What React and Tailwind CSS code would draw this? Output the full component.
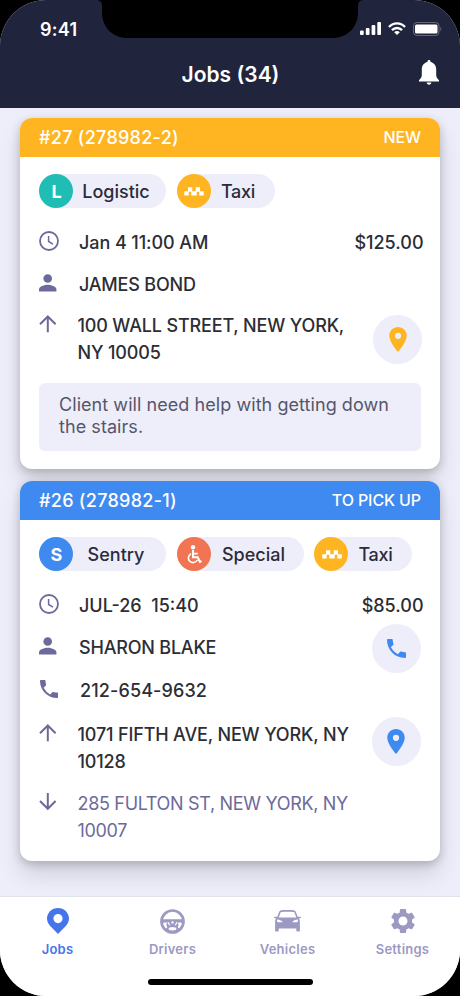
import React from "react";
import clsx from "clsx";
import { MdSettings } from "react-icons/md";

const JOBS = [
	{
		id: "27",
		title: "#27 (278982-2)",
		status: "NEW",
		color: "bg-[#ffb522]",
		accent: "text-[#ffb522]",
		height: "h-[351px]",
		pinClass: "mt-[3px] -mr-px",
		tags: [
			{ type: "logistic", label: "Logistic", width: "w-[127px]" },
			{ type: "taxi", label: "Taxi", width: "w-[98px]" },
		],
		date: "Jan 4 11:00 AM",
		price: "$125.00",
		client: "JAMES BOND",
		pickup: ["100 WALL STREET, NEW YORK,", "NY 10005"],
		note: ["Client will need help with getting down", "the stairs."],
	},
	{
		id: "26",
		title: "#26 (278982-1)",
		status: "TO PICK UP",
		color: "bg-[#3e8af1]",
		accent: "text-[#3e8af1]",
		height: "h-[380px]",
		pinClass: "-mt-[4px] pr-px",
		tags: [
			{ type: "sentry", label: "Sentry", width: "w-[127px]" },
			{ type: "special", label: "Special", width: "w-[127px]" },
			{ type: "taxi", label: "Taxi", width: "w-[98px]" },
		],
		date: "JUL-26\u00a0 15:40",
		price: "$85.00",
		client: "SHARON BLAKE",
		phone: "212-654-9632",
		pickup: ["1071 FIFTH AVE, NEW YORK, NY", "10128"],
		dropoff: ["285 FULTON ST, NEW YORK, NY", "10007"],
	},
];

const TAG_COLORS = {
	logistic: "bg-[#20bdb5]",
	sentry: "bg-[#3e8af1]",
	special: "bg-[#f17552]",
	taxi: "bg-[#ffb522]",
};

const ClockIcon = () => (
	<svg width="20" height="20" viewBox="0 0 20 20" fill="none" stroke="currentColor">
		<circle cx="10" cy="10" r="9" strokeWidth="1.8" />
		<path d="M9.6 5v5.500l4.400 2.600" strokeWidth="1.500" />
	</svg>
);

const PersonIcon = () => (
	<svg width="18" height="18" viewBox="0 0 18 18" fill="currentColor">
		<circle cx="8.700" cy="4.500" r="4.300" />
		<path d="M0 17.500v-2.200c0-2.900 5.800-4.500 8.700-4.500s8.700 1.600 8.700 4.500v2.200z" />
	</svg>
);

const PhoneIcon = ({ className }) => (
	<svg className={className} viewBox="3 3 18 18" fill="currentColor">
		<path d="M6.62 10.79a15.15 15.15 0 0 0 6.59 6.59l2.2-2.2c.27-.27.67-.36 1.02-.24 1.12.37 2.33.57 3.57.57.55 0 1 .45 1 1V20c0 .55-.45 1-1 1C10.61 21 3 13.39 3 4c0-.55.45-1 1-1h3.5c.55 0 1 .45 1 1 0 1.25.2 2.45.57 3.57.11.35.03.74-.25 1.02z" />
	</svg>
);

const ArrowIcon = ({ down }) => (
	<svg width="18" height="18" viewBox="0 0 18 18" fill="none" stroke="currentColor" strokeWidth="2">
		{down ? <path d="M8.800 0v15.500M1 8l7.800 7.800L16.600 8" /> : <path d="M8.800 17.300V1.800M1 9.300l7.800-7.800 7.800 7.800" />}
	</svg>
);

const PinIcon = ({ className }) => (
	<svg className={className} viewBox="5 2 14 20" fill="currentColor">
		<path d="M12 2C8.13 2 5 5.13 5 9c0 5.25 7 13 7 13s7-7.75 7-13c0-3.87-3.13-7-7-7zm0 9.5a2.5 2.5 0 0 1 0-5 2.5 2.5 0 0 1 0 5z" />
	</svg>
);

const BellIcon = () => (
	<svg width="20" height="25" viewBox="0 0 20 25" fill="currentColor">
		<path d="M10 0c-1 0-1.500.7-1.500 1.500v.6C5 2.800 2.800 5.800 2.800 9.400v5.400c0 2.200-.6 3.600-2.800 5.400v1.400h20v-1.400c-2.200-1.800-2.800-3.200-2.800-5.400V9.400c0-3.600-2.200-6.600-5.700-7.300v-.6C11.500.7 11 0 10 0z" />
		<path d="M7.700 22.600h4.600c0 1.300-1 2.200-2.300 2.200s-2.300-.9-2.300-2.200z" />
	</svg>
);

const TaxiIcon = () => (
	<svg width="20" height="9" viewBox="0 0 20 9" fill="currentColor">
		<path d="M4 .3h4.300v4.400H4zM11.700 .3h4.300v4.400h-4.300zM.3 4.200h4.400v4.200H.3zM7.300 4.200h5.400v4.200h-5.400zM15.300 4.200h4.400v4.200h-4.400z" />
	</svg>
);

const WheelchairIcon = () => (
	<svg width="16" height="19" viewBox="0 0 16 19" fill="none" stroke="currentColor">
		<circle cx="7" cy="2.200" r="2.200" fill="currentColor" stroke="none" />
		<path d="M7 5v7.300h4.700l2.200 4.600 1.700-.8" strokeWidth="2.100" />
		<path d="M7 8.600h4.800" strokeWidth="1.700" />
		<path d="M5 8.700a4.700 4.700 0 1 0 6.300 6.300" strokeWidth="1.600" />
	</svg>
);

const WheelIcon = () => (
	<svg width="25" height="25" viewBox="0 0 25 25" fill="none" stroke="currentColor">
		<circle cx="12.500" cy="12.500" r="11" strokeWidth="2.700" />
		<path
			d="M2 10.300h21v3.500c-3.500.2-5 2-5.200 5l2.400 1.400-2 2.300H6.800l-2-2.300 2.400-1.400c-.2-3-1.700-4.800-5.200-5z"
			fill="currentColor"
			stroke="none"
		/>
		<path d="M3.600 13.600h3.600l-1.600 3.800zM21.400 13.600h-3.600l1.600 3.800z" fill="white" stroke="none" />
		<path d="M8 13.200l1.700 3M17 13.200l-1.700 3" stroke="white" strokeWidth="1.300" />
		<circle cx="12.500" cy="13.400" r="1.200" fill="white" stroke="none" />
		<ellipse cx="12.500" cy="19.700" rx="3.900" ry="1.700" fill="white" stroke="none" />
	</svg>
);

const CarIcon = () => (
	<svg width="27" height="22" viewBox="0 0 27 22" fill="currentColor">
		<path
			fillRule="evenodd"
			d="M7.200.3C9 0 18 0 19.800.3c1.200.2 1.800 1 2.200 2l1.700 4.500h2.500c.9 0 .9 1.500 0 1.500h-1.500c.9.900 1.200 1.800 1.200 3v8.900c0 .8-.4 1.300-1.200 1.300h-1.200c-.8 0-1.200-.5-1.200-1.300v-1.700H4.700v1.700c0 .8-.4 1.300-1.200 1.300H2.300c-.8 0-1.200-.5-1.200-1.300v-8.900c0-1.200.3-2.100 1.200-3H.8c-.9 0-.9-1.500 0-1.500h2.500L5 2.300C5.400 1.300 6 .5 7.200.3zM7.400 1.900c-.6.100-.8.500-1 1L4.700 7.600h17.600l-1.700-4.700c-.2-.5-.4-.9-1-1-1.800-.3-10.400-.3-12.200 0zM3 9.600c-.2 1.900.4 2.700 2 2.700h3.600c-.3-1.500-2.400-2.400-5.600-2.700zM24 9.600c.2 1.900-.4 2.700-2 2.700h-3.600c.3-1.500 2.400-2.400 5.600-2.700z"
		/>
	</svg>
);

const TABS = [
	{
		label: "Jobs",
		active: true,
		icon: (
			<svg width="22" height="26" viewBox="0 0 22 26" fill="currentColor">
				<path
					fillRule="evenodd"
					d="M11 0C4.900 0 0 4.700 0 10.600c0 3 1.300 5.200 3.200 7.300L11 26l7.800-8.100c1.900-2.100 3.200-4.300 3.200-7.300C22 4.700 17.100 0 11 0zm0 6a4.600 4.600 0 1 1 0 9.200A4.600 4.600 0 0 1 11 6z"
				/>
			</svg>
		),
	},
	{ label: "Drivers", icon: <WheelIcon /> },
	{ label: "Vehicles", icon: <CarIcon /> },
	{ label: "Settings", icon: <MdSettings size={30} /> },
];

const StatusBar = () => (
	<div className="flex h-[57px] items-center justify-between pl-10 pr-[18px]">
		<span className="pt-px text-[18px] font-semibold tracking-[0.3px]">9:41</span>
		<div className="flex items-center gap-[7px]">
			<svg width="21" height="13" viewBox="0 0 21 13" fill="currentColor">
				<rect x="0" y="8.500" width="3.700" height="4.500" rx="1" />
				<rect x="5.800" y="6" width="3.700" height="7" rx="1" />
				<rect x="11.600" y="3" width="3.700" height="10" rx="1" />
				<rect x="17.300" y="0" width="3.700" height="13" rx="1" />
			</svg>
			<svg width="18" height="13" viewBox="0 0 18 13" fill="none" stroke="currentColor" strokeWidth="2.400">
				<path d="M1 5C5.500.2 12.500.2 17 5M4 8.200c2.800-2.900 7.200-2.900 10 0" />
				<path d="M9 13 6.200 10.200c1.500-1.500 4.100-1.500 5.600 0z" fill="currentColor" stroke="none" />
			</svg>
			<svg width="29" height="14" viewBox="0 0 29 14">
				<rect x=".5" y=".5" width="25.500" height="13" rx="3.500" fill="none" stroke="white" strokeOpacity=".3" />
				<rect x="2" y="2.500" width="22.500" height="9" rx="1.500" fill="white" />
				<path d="M27.300 4.700c1.400.8 1.400 3.800 0 4.600z" fill="white" fillOpacity=".3" />
			</svg>
		</div>
	</div>
);

const Tag = ({ type, label, width }) => (
	<div className={clsx("flex h-[34px] items-center rounded-full bg-[#eeeefa]", width)}>
		<span
			className={clsx(
				"flex size-[34px] shrink-0 items-center justify-center rounded-full pl-px text-[18px] font-bold text-white",
				TAG_COLORS[type]
			)}
		>
			{type === "logistic" && "L"}
			{type === "sentry" && "S"}
			{type === "special" && <WheelchairIcon />}
			{type === "taxi" && <TaxiIcon />}
		</span>
		<span
			className={clsx(
				"flex-1 text-center text-[18px] font-medium text-[#2b2b3a]",
				type === "taxi" ? "pr-[9px] tracking-[-0.3px]" : "pr-[7px]"
			)}
		>
			{label}
		</span>
	</div>
);

const Row = ({ icon, children, right, className }) => (
	<div className={clsx("flex items-center", className || "h-[42px]")}>
		<span className="flex w-[40px] shrink-0 pb-[3px] text-[#6c6a9b]">{icon}</span>
		<span className="flex-1 whitespace-nowrap">{children}</span>
		{right}
	</div>
);

const Address = ({ lines, down, accent, pinClass }) => (
	<div className="flex h-[54px]">
		<span className="w-[38.500px] shrink-0 pt-[3px] text-[#6c6a9b]">
			<ArrowIcon down={down} />
		</span>
		<p
			className={clsx(
				"flex-1 whitespace-nowrap leading-[27px]",
				down ? "font-normal tracking-[-0.32px] text-[#6c6a9b]" : "tracking-[-0.16px]"
			)}
		>
			{lines[0]}
			<br />
			{lines[1]}
		</p>
		{accent && (
			<RoundButton className={clsx(pinClass, accent)}>
				<PinIcon className="h-[25px] w-[18px]" />
			</RoundButton>
		)}
	</div>
);

const RoundButton = ({ className, children }) => (
	<button
		className={clsx(
			"flex size-[49px] shrink-0 items-center justify-center rounded-full bg-[#eeeefa]",
			className
		)}
	>
		{children}
	</button>
);

const JobCard = ({ job }) => (
	<article
		className={clsx(
			"overflow-hidden rounded-[12px] bg-white shadow-[0_14px_22px_rgba(0,0,0,0.12),0_3px_10px_rgba(0,0,0,0.2)]",
			job.height
		)}
	>
		<header className={clsx("flex h-[39px] items-center justify-between px-[19px] text-white", job.color)}>
			<h2 className="text-[18px] font-medium tracking-[0.28px]">{job.title}</h2>
			<span className="pb-[2px] text-[16px] font-medium tracking-[-0.1px]">{job.status}</span>
		</header>
		<div className="px-[19px] pt-[17px] text-[18px] font-medium text-[#2d2d35]">
			<div className="mb-[13px] flex gap-[10.500px]">
				{job.tags.map((tag) => (
					<Tag key={tag.type} {...tag} />
				))}
			</div>
			<Row icon={<ClockIcon />} right={<span className="-mr-[2.500px]">{job.price}</span>}>
				<span className={clsx(!job.phone && "tracking-[-0.08px]")}>{job.date}</span>
			</Row>
			<Row
				icon={<PersonIcon />}
				right={
					job.phone && (
						<RoundButton className={clsx("mt-[2px]", job.accent)}>
							<PhoneIcon className="size-[19px]" />
						</RoundButton>
					)
				}
			>
				<span className="tracking-[-0.2px]">{job.client}</span>
			</Row>
			{job.phone && (
				<Row className="h-[44px]" icon={<PhoneIcon className="ml-px size-[18px]" />}>
					<span className="pl-px tracking-[0.12px]">{job.phone}</span>
				</Row>
			)}
			<div className={job.phone ? "pt-[9px]" : "pt-[7px]"}>
				<Address lines={job.pickup} accent={job.accent} pinClass={job.pinClass} />
			</div>
			{job.dropoff && (
				<div className="pt-[15px]">
					<Address lines={job.dropoff} down />
				</div>
			)}
			{job.note && (
				<p className="mt-[17px] h-[68px] whitespace-nowrap rounded-[6px] bg-[#eeeefa] pl-5 pt-[11px] text-[18px] font-normal leading-[22px] tracking-[0.06px] text-[#56566a]">
					{job.note[0]}
					<br />
					{job.note[1]}
				</p>
			)}
		</div>
	</article>
);

export default function App() {
	return (
		<div className="h-[996px] w-[460px] overflow-hidden bg-black font-['Inter',sans-serif]">
			<div className="relative flex h-full flex-col overflow-hidden rounded-[46px] bg-[#edeefa]">
				<header className="h-[108px] shrink-0 bg-[#21243d] text-white">
					<StatusBar />
					<div className="grid h-[34px] grid-cols-[1fr_auto_1fr] items-center pl-[22px] pr-[21px]">
						<h1 className="col-start-2 pt-[2px] text-[21px] font-semibold">Jobs (34)</h1>
						<button className="justify-self-end pb-[3px]">
							<BellIcon />
						</button>
					</div>
				</header>

				{/* Job list */}
				<main className="flex flex-1 flex-col gap-3 overflow-hidden px-5 pt-[10px]">
					{JOBS.map((job) => (
						<JobCard key={job.id} job={job} />
					))}
				</main>

				{/* Bottom tabs */}
				<nav className="flex h-[100px] shrink-0 flex-col items-center border-t border-[#e2e2ea] bg-white">
					<div className="flex h-[82px] w-full">
						{TABS.map((tab) => (
							<a
								key={tab.label}
								className={clsx(
									"flex w-[115px] flex-col items-center pt-[9px] text-[13px] font-semibold",
									tab.active ? "text-[#4674ea]" : "text-[#9c99c3]"
								)}
							>
								<span className="flex h-[30px] items-center">{tab.icon}</span>
								<span className="pt-[4px] tracking-[0.25px]">{tab.label}</span>
							</a>
						))}
					</div>
					<div className="h-[6px] w-[165px] rounded-full bg-black" />
				</nav>

				{/* Notch */}
				<svg className="absolute left-0 top-0" width="460" height="40" viewBox="0 0 460 40">
					<path d="M96 0c4 0 6 2 6 6v6c0 16 11 26 26 26h204c15 0 26-10 26-26V6c0-4 2-6 6-6z" fill="black" />
				</svg>
			</div>
		</div>
	);
}
